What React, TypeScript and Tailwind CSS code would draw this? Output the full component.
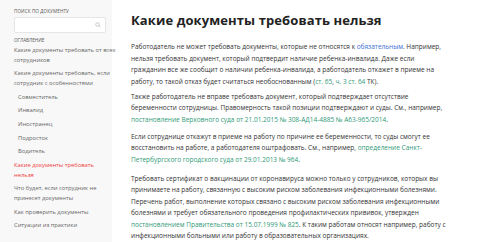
import React from "react";

const toc = [
  { label: ["Какие документы требовать от всех", "сотрудников"], level: 0 },
  { label: ["Какие документы требовать, если", "сотрудник с особенностями"], level: 0 },
  { label: ["Совместитель"], level: 1 },
  { label: ["Инвалид"], level: 1 },
  { label: ["Иностранец"], level: 1 },
  { label: ["Подросток"], level: 1 },
  { label: ["Водитель"], level: 1 },
  { label: ["Какие документы требовать", "нельзя"], level: 0, active: true },
  { label: ["Что будет, если сотрудник не", "принесет документы"], level: 0 },
  { label: ["Как проверить документы"], level: 0 },
  { label: ["Ситуации из практики"], level: 0 },
];

const Green = ({ children }: { children: React.ReactNode }) => (
  <span className="text-[#2f9a78]">{children}</span>
);

const Line = ({ children }: { children: React.ReactNode }) => (
  <div className="h-[11.5px] leading-[11.5px]">{children}</div>
);

export default function App() {
  return (
    <div className="flex w-[500px] h-[242px] overflow-hidden bg-white font-['Open_Sans',sans-serif]">
      <aside className="w-[112px] shrink-0 bg-[#f8f8f8] pl-[14px] pr-[2px] pt-[8px]">
        <div className="h-[6px] leading-[6px] text-[4.6px] uppercase text-[#555] tracking-[0.1px]">Поиск по документу</div>
        <div className="mt-[3px] w-[92px] h-[16px] bg-white border border-[#e6e6e6] rounded-[2px] flex items-center justify-end pr-[4px]">
          <svg width="6" height="6" viewBox="0 0 12 12" fill="none" stroke="#b5b5b5" strokeWidth="1.4">
            <circle cx="5" cy="5" r="3.6" />
            <path d="M7.7 7.7L11 11" />
          </svg>
        </div>
        <div className="mt-[4px] h-[7px] leading-[7px] text-[4.6px] uppercase text-[#555]">Оглавление</div>
        <nav className="mt-[2px] flex flex-col gap-[4.1px] whitespace-nowrap">
          {toc.map((item, i) => (
            <div
              key={i}
              className={`text-[5.8px] ${item.level ? "pl-[4px]" : ""} ${item.active ? "text-[#ee3b3b]" : "text-[#666]"}`}
            >
              {item.label.map((l, j) => (
                <div key={j} className="h-[9.6px] leading-[9.6px]">{l}</div>
              ))}
            </div>
          ))}
        </nav>
      </aside>
      <main className="pl-[19px] pt-[11px] text-[#333]">
        <h1 className="h-[18px] text-[13px] font-bold text-[#222] leading-[18px] tracking-[0.1px]">Какие документы требовать нельзя</h1>
        <div className="mt-[12px] flex flex-col gap-[3.5px] text-[6.5px] whitespace-nowrap">
          <div>
            <Line>
              Работодатель не может требовать документы, которые не относятся к <span className="text-[#3d6fd8]">обязательным</span>. Например,
            </Line>
            <Line>нельзя требовать документ, который подтвердит наличие ребенка-инвалида. Даже если</Line>
            <Line>гражданин все же сообщит о наличии ребенка-инвалида, а работодатель откажет в приеме на</Line>
            <Line>
              работу, то такой отказ будет считаться необоснованным (<Green>ст. 65</Green>, <Green>ч. 3 ст. 64</Green> ТК).
            </Line>
          </div>
          <div>
            <Line>Также работодатель не вправе требовать документ, который подтверждает отсутствие</Line>
            <Line>беременности сотрудницы. Правомерность такой позиции подтверждают и суды. См., например,</Line>
            <Line>
              <Green>постановление Верховного суда от 21.01.2015 № 308-АД14-4885 № А63-965/2014</Green>.
            </Line>
          </div>
          <div className="mt-[2px]">
            <Line>Если сотруднице откажут в приеме на работу по причине ее беременности, то суды смогут ее</Line>
            <Line>
              восстановить на работе, а работодателя оштрафовать. См., например, <Green>определение Санкт-</Green>
            </Line>
            <Line>
              <Green>Петербургского городского суда от 29.01.2013 № 964</Green>.
            </Line>
          </div>
          <div className="mt-[4px]">
            <Line>Требовать сертификат о вакцинации от коронавируса можно только у сотрудников, которых вы</Line>
            <Line>принимаете на работу, связанную с высоким риском заболевания инфекционными болезнями.</Line>
            <Line>Перечень работ, выполнение которых связано с высоким риском заболевания инфекционными</Line>
            <Line>болезнями и требует обязательного проведения профилактических прививок, утвержден</Line>
            <Line>
              <Green>постановлением Правительства от 15.07.1999 № 825</Green>. К таким работам относят например, работу с
            </Line>
            <Line>инфекционными больными или работу в образовательных организациях.</Line>
          </div>
        </div>
      </main>
    </div>
  );
}
